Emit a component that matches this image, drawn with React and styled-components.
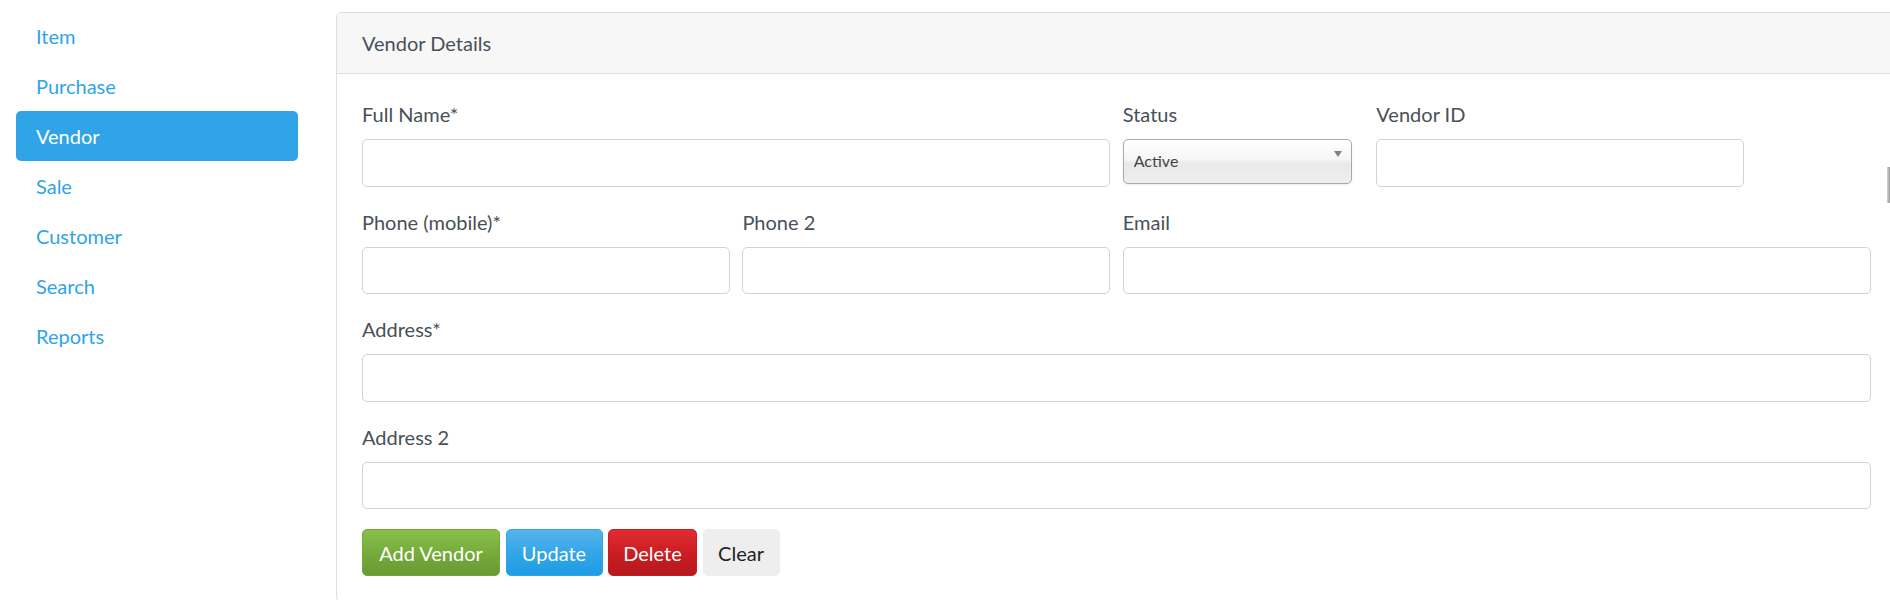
import React from 'react';
import styled, { createGlobalStyle } from 'styled-components';

const GlobalStyle = createGlobalStyle`
    body {
        margin: 0;
        font-family: Lato, "Open Sans", sans-serif;
        font-size: 20px;
        color: #495057;
        background: #fff;
        overflow: hidden;
    }
    * {
        box-sizing: border-box;
    }
`;

const Page = styled.div`
    display: flex;
    align-items: flex-start;
    width: 1890px;
    height: 600px;
`;

const Sidebar = styled.nav`
    width: 336px;
    flex-shrink: 0;
    padding: 11px 38px 0 16px;
    display: flex;
    flex-direction: column;
`;

const NavLink = styled.a`
    display: block;
    height: 50px;
    line-height: 50px;
    padding: 0 20px;
    border-radius: 5px;
    font-size: 20px;
    text-decoration: none;
    cursor: pointer;
    color: ${p => (p.$active ? '#fff' : '#2fa4e7')};
    background: ${p => (p.$active ? '#2fa4e7' : 'transparent')};
`;

const Main = styled.main`
    flex-shrink: 0;
    width: 1561px;
    padding-top: 12px;
`;

const Card = styled.div`
    border: 1px solid #dfdfdf;
    border-radius: 5px;
    background: #fff;
`;

const CardHeader = styled.div`
    padding: 15px 25px;
    line-height: 30px;
    font-size: 20px;
    background: #f7f7f7;
    border-bottom: 1px solid #dfdfdf;
    border-radius: 5px 5px 0 0;
`;

const CardBody = styled.div`
    padding: 25px;
`;

const FormRow = styled.div`
    display: grid;
    grid-template-columns: repeat(12, 1fr);
    column-gap: 12.5px;
`;

const Field = styled.div`
    grid-column: span ${p => p.$span};
    margin-bottom: 20px;
`;

const Label = styled.label`
    display: block;
    line-height: 30px;
    margin-bottom: 10px;
`;

const Input = styled.input`
    display: block;
    width: 100%;
    height: 47.5px;
    padding: 7.5px 15px;
    font: inherit;
    color: #495057;
    border: 1px solid #ced4da;
    border-radius: 5px;
    background: #fff;
    outline: none;
`;

const SelectWrap = styled.div`
    position: relative;
    width: 229px;
    height: 45px;
    margin-top: 1px;
`;

const Select = styled.select`
    appearance: none;
    width: 100%;
    height: 100%;
    padding: 0 10px 2px;
    font-family: Lato, sans-serif;
    font-size: 16px;
    color: #444;
    border: 1px solid #a9a9a9;
    border-radius: 5px;
    background: linear-gradient(#ffffff 0%, #f6f6f6 45%, #e9e9e9 55%, #efefef 100%);
    box-shadow: 0 1px 2px rgba(0, 0, 0, 0.08);
    outline: none;
`;

const Caret = styled.span`
    position: absolute;
    right: 10px;
    top: 12px;
    width: 0;
    height: 0;
    border-left: 4px solid transparent;
    border-right: 4px solid transparent;
    border-top: 6px solid #808080;
    pointer-events: none;
`;

const ButtonRow = styled.div`
    display: flex;
    gap: 5.5px;
`;

const variants = {
    success: { bg: 'linear-gradient(#88c149, #73a839 60%, #699934)', border: '#73a839', color: '#fff' },
    primary: { bg: 'linear-gradient(#54b4eb, #2fa4e7 60%, #1d9ce5)', border: '#2fa4e7', color: '#fff' },
    danger: { bg: 'linear-gradient(#e12b31, #c71c22 60%, #b5191f)', border: '#c71c22', color: '#fff' },
    light: { bg: '#eeeeee', border: '#eeeeee', color: '#222' },
};

const Button = styled.button`
    width: ${p => p.$width}px;
    height: 47px;
    padding: 0;
    text-align: center;
    font-family: Lato, sans-serif;
    font-size: 20px;
    line-height: 30px;
    border-radius: 5px;
    cursor: pointer;
    color: ${p => variants[p.$variant].color};
    background: ${p => variants[p.$variant].bg};
    border: 1px solid ${p => variants[p.$variant].border};
`;

const ScrollNub = styled.div`
    position: fixed;
    right: 0;
    top: 167px;
    width: 3px;
    height: 36px;
    background: linear-gradient(90deg, #d6d6d6, #9a9a9a);
`;

const navItems = ['Item', 'Purchase', 'Vendor', 'Sale', 'Customer', 'Search', 'Reports'];

const App = () => (
    <>
        <GlobalStyle />
        <Page>
            <Sidebar>
                {navItems.map(item => (
                    <NavLink key={item} $active={item === 'Vendor'}>
                        {item}
                    </NavLink>
                ))}
            </Sidebar>
            <Main>
                <Card>
                    <CardHeader>Vendor Details</CardHeader>
                    <CardBody>
                        <FormRow>
                            <Field $span={6}>
                                <Label>Full Name*</Label>
                                <Input />
                            </Field>
                            <Field $span={2}>
                                <Label>Status</Label>
                                <SelectWrap>
                                    <Select defaultValue="Active">
                                        <option>Active</option>
                                        <option>Inactive</option>
                                    </Select>
                                    <Caret />
                                </SelectWrap>
                            </Field>
                            <Field $span={3}>
                                <Label>Vendor ID</Label>
                                <Input />
                            </Field>
                        </FormRow>
                        <FormRow>
                            <Field $span={3}>
                                <Label>Phone (mobile)*</Label>
                                <Input />
                            </Field>
                            <Field $span={3}>
                                <Label>Phone 2</Label>
                                <Input />
                            </Field>
                            <Field $span={6}>
                                <Label>Email</Label>
                                <Input />
                            </Field>
                        </FormRow>
                        <FormRow>
                            <Field $span={12}>
                                <Label>Address*</Label>
                                <Input />
                            </Field>
                        </FormRow>
                        <FormRow>
                            <Field $span={12}>
                                <Label>Address 2</Label>
                                <Input />
                            </Field>
                        </FormRow>
                        <ButtonRow>
                            <Button $variant="success" $width={138}>Add Vendor</Button>
                            <Button $variant="primary" $width={97}>Update</Button>
                            <Button $variant="danger" $width={89}>Delete</Button>
                            <Button $variant="light" $width={77}>Clear</Button>
                        </ButtonRow>
                    </CardBody>
                </Card>
            </Main>
        </Page>
        <ScrollNub />
    </>
);

export default App;
